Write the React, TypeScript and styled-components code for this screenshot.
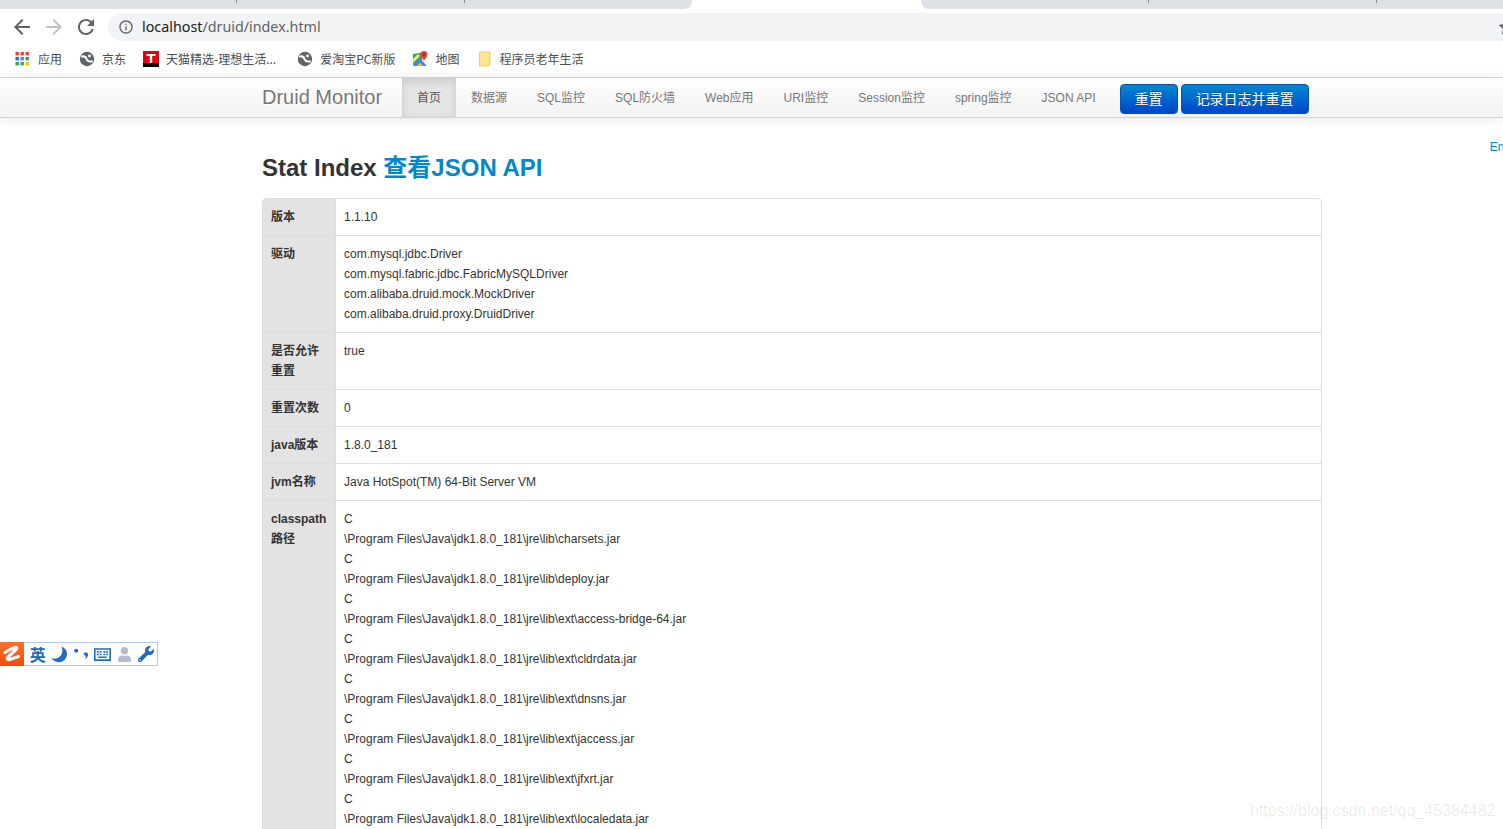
import React from "react";
import styled, { createGlobalStyle } from "styled-components";
import { FaUser, FaWrench } from "react-icons/fa";

const GlobalStyle = createGlobalStyle`
  html, body { margin: 0; padding: 0; height: 100%; overflow: hidden; background: #fff; }
  body { font-family: "Liberation Sans", "Noto Sans CJK SC", sans-serif; font-size: 12px; color: #333; }
`;

const Frame = styled.div`
  position: relative;
  width: 1503px;
  height: 829px;
  overflow: hidden;
`;

const TabStrip = styled.div`
  display: flex;
  height: 9px;
  background: #fff;
`;

const Tab = styled.div<{ $w: number; $active?: boolean; $round?: "l" | "r"; $sep?: boolean }>`
  width: ${(p) => p.$w}px;
  flex: none;
  background: ${(p) =>
    p.$active
      ? "transparent"
      : p.$sep
      ? "linear-gradient(#8d9095, #8d9095) right top / 1px 3px no-repeat, #dee1e6"
      : "#dee1e6"};
  border-bottom-right-radius: ${(p) => (p.$round === "r" ? "8px" : "0")};
  border-bottom-left-radius: ${(p) => (p.$round === "l" ? "8px" : "0")};
`;

const Toolbar = styled.div`
  display: flex;
  align-items: flex-end;
  height: 32px;
  padding-left: 10px;
`;

const NavIcon = styled.svg<{ $dim?: boolean }>`
  width: 24px;
  height: 24px;
  flex: none;
  margin: 0 8px 2px 0;
  fill: ${(p) => (p.$dim ? "#bdc1c6" : "#5f6368")};
`;

const AddressBar = styled.div`
  flex: 1;
  height: 28px;
  margin-left: 2px;
  display: flex;
  align-items: center;
  background: #f1f3f4;
  border-radius: 14px 0 0 14px;
  padding-left: 10px;
  overflow: hidden;
`;

const InfoIcon = styled.svg`
  width: 16px;
  height: 16px;
  flex: none;
  fill: #5f6368;
`;

const UrlText = styled.div`
  flex: 1;
  margin-left: 8px;
  padding-bottom: 2px;
  font-family: "Noto Sans", sans-serif;
  font-size: 14.3px;
  color: #5f6368;
  white-space: nowrap;
  b { font-weight: 400; color: #202124; }
`;

const StarIcon = styled.svg`
  width: 16px;
  height: 16px;
  flex: none;
  margin-right: -12px;
  fill: none;
  stroke: #5f6368;
  stroke-width: 1.5;
`;

const BookmarkBar = styled.div`
  display: flex;
  align-items: center;
  height: 36px;
  box-sizing: border-box;
  padding: 0 0 1px 15px;
  gap: 17px;
  background: #fff;
`;

const Bookmark = styled.div<{ $extra?: number }>`
  display: flex;
  align-items: center;
  gap: 7px;
  margin-right: ${(p) => p.$extra || 0}px;
  font-size: 12px;
  color: #4a4d52;
  white-space: nowrap;
  font-family: "Noto Sans CJK SC", "Liberation Sans", sans-serif;
`;

const BookIcon = styled.svg`
  width: 16px;
  height: 16px;
  flex: none;
  display: block;
`;

const NavBar = styled.header`
  position: relative;
  height: 39px;
  padding-left: 262px;
  display: flex;
  align-items: stretch;
  background: linear-gradient(#ffffff, #f2f2f2);
  border-top: 1px solid #d4d4d4;
  border-bottom: 1px solid #d4d4d4;
  box-shadow: 0 1px 10px rgba(0, 0, 0, 0.1);
`;

const Brand = styled.a`
  width: 140px;
  flex: none;
  font-size: 20px;
  font-weight: 200;
  color: #777;
  line-height: 39px;
  text-shadow: 0 1px 0 #fff;
`;

const NavItem = styled.a<{ $active?: boolean }>`
  padding: 1px 15px 0;
  line-height: 38px;
  font-size: 12px;
  white-space: nowrap;
  color: ${(p) => (p.$active ? "#555" : "#777")};
  background: ${(p) => (p.$active ? "#e5e5e5" : "transparent")};
  box-shadow: ${(p) => (p.$active ? "inset 0 3px 8px rgba(0, 0, 0, 0.125)" : "none")};
`;

const ResetButtons = styled.div`
  display: flex;
  align-items: center;
  gap: 3px;
  margin-left: 9px;
  padding-top: 3px;
`;

const ActionButton = styled.button`
  height: 30px;
  padding: 0 14px 2px;
  border: 1px solid #0055b3;
  border-radius: 4px;
  background: linear-gradient(#0088cc, #0044cc);
  color: #fff;
  font-family: "Liberation Sans", "Noto Sans CJK SC", sans-serif;
  font-size: 14px;
  text-shadow: 0 -1px 0 rgba(0, 0, 0, 0.25);
`;

const Main = styled.main`
  padding: 30px 0 0 262px;
`;

const LangLink = styled.a`
  float: right;
  margin: -11px -26px 0 0;
  line-height: 20px;
  color: #0088cc;
`;

const Heading = styled.h3`
  margin: 0 0 10px;
  font-size: 24px;
  line-height: 40px;
  font-weight: bold;
  color: #333;
  a { color: #0088cc; }
`;

const StatTable = styled.table`
  width: 1060px;
  border: 1px solid #ddd;
  border-collapse: separate;
  border-spacing: 0;
  border-radius: 4px;
  line-height: 20px;
  font-size: 12px;
  color: #333;
`;

const HeadCell = styled.th<{ $first?: boolean }>`
  width: 56px;
  padding: 8px;
  text-align: left;
  vertical-align: top;
  font-weight: bold;
  background: #e3e3e3;
  border-top: ${(p) => (p.$first ? "0" : "1px solid #ddd")};
  border-top-left-radius: ${(p) => (p.$first ? "3px" : "0")};
`;

const ValueCell = styled.td<{ $first?: boolean }>`
  padding: 8px;
  vertical-align: top;
  border-left: 1px solid #ddd;
  border-top: ${(p) => (p.$first ? "0" : "1px solid #ddd")};
`;

const Line = styled.div``;

const ImeBar = styled.div`
  position: absolute;
  left: 0;
  top: 642px;
  display: flex;
  align-items: center;
  width: 158px;
  height: 24px;
  box-sizing: border-box;
  background: #fff;
  border: 1px solid #b3ccef;
  border-left: 0;
`;

const ImeLogo = styled.svg`
  width: 24px;
  height: 24px;
  flex: none;
  margin: -1px 3px -1px 0;
`;

const ImeSlot = styled.span<{ $color?: string }>`
  flex: 1;
  display: flex;
  align-items: center;
  justify-content: center;
  height: 22px;
  color: ${(p) => p.$color || "#1f6cbb"};
  font-size: 16px;
  font-weight: bold;
  font-family: "Noto Sans CJK SC", sans-serif;
`;

const ImeIcon = styled.svg`
  width: 17px;
  height: 17px;
  fill: #1f6cbb;
`;

const Watermark = styled.div`
  position: absolute;
  left: 1250px;
  top: 801px;
  font-size: 16px;
  line-height: 20px;
  color: rgba(0, 0, 0, 0.09);
  white-space: nowrap;
`;

const Globe = () => (
  <BookIcon viewBox="0 0 16 16">
    <circle cx="8" cy="8" r="7.2" fill="#5f6368" />
    <path
      d="M3 5.500C5.500 5 7 6.500 7.500 8S9.500 11 13 10.500"
      fill="none"
      stroke="#fff"
      strokeWidth="2"
      strokeLinecap="round"
    />
    <circle cx="10.500" cy="5" r="1.400" fill="#fff" />
  </BookIcon>
);

const AppsIcon = () => {
  const colors = ["#ea4335", "#ea4335", "#ea4335", "#1a73e8", "#4285f4", "#34a853", "#34a853", "#34a853", "#fbbc04"];
  return (
    <BookIcon viewBox="0 0 16 16">
      {colors.map((c, i) => (
        <rect key={i} x={0.5 + (i % 3) * 5} y={1 + Math.floor(i / 3) * 5} width="3.4" height="3.4" fill={c} />
      ))}
    </BookIcon>
  );
};

const TmallIcon = () => (
  <BookIcon viewBox="0 0 16 16">
    <rect width="16" height="12" fill="#e60012" />
    <rect y="12" width="16" height="4" fill="#000" />
    <path d="M3.500 3h9v2H9.200v7H6.800V5H3.500z" fill="#fff" />
  </BookIcon>
);

const MapIcon = () => (
  <BookIcon viewBox="0 0 16 16">
    <path d="M1 3l9-1.500V15H2.500L1 14z" fill="#34a853" />
    <path d="M1 14L8 7l6 7v1H2.500z" fill="#4285f4" />
    <path d="M5 15l3-3.500 3 3.500z" fill="#fbbc04" />
    <path d="M1 8L6 3l2 2-7 7z" fill="#fbe68a" />
    <path d="M12 0a3.400 3.400 0 0 0-3.400 3.400C8.600 5.800 12 9.500 12 9.500s3.400-3.700 3.400-6.100A3.400 3.400 0 0 0 12 0z" fill="#ea4335" />
    <circle cx="12" cy="3.400" r="1.200" fill="#9c1b12" />
  </BookIcon>
);

const NoteIcon = () => (
  <BookIcon viewBox="0 0 16 16">
    <path d="M2.500 1h10.500v12.500L11 15H2.500z" fill="#fde68f" stroke="#f0cf5e" />
    <path d="M11 15v-2h2" fill="none" stroke="#f0cf5e" />
  </BookIcon>
);

const nav = ["数据源", "SQL监控", "SQL防火墙", "Web应用", "URI监控", "Session监控", "spring监控", "JSON API"];

const base = "\\Program Files\\Java\\jdk1.8.0_181\\jre\\lib\\";
const jars = [
  "charsets.jar",
  "deploy.jar",
  "ext\\access-bridge-64.jar",
  "ext\\cldrdata.jar",
  "ext\\dnsns.jar",
  "ext\\jaccess.jar",
  "ext\\jfxrt.jar",
  "ext\\localedata.jar",
];

const rows: { head: string; lines: string[] }[] = [
  { head: "版本", lines: ["1.1.10"] },
  {
    head: "驱动",
    lines: [
      "com.mysql.jdbc.Driver",
      "com.mysql.fabric.jdbc.FabricMySQLDriver",
      "com.alibaba.druid.mock.MockDriver",
      "com.alibaba.druid.proxy.DruidDriver",
    ],
  },
  { head: "是否允许重置", lines: ["true"] },
  { head: "重置次数", lines: ["0"] },
  { head: "java版本", lines: ["1.8.0_181"] },
  { head: "jvm名称", lines: ["Java HotSpot(TM) 64-Bit Server VM"] },
  { head: "classpath路径", lines: jars.flatMap((j) => ["C", base + j]) },
];

export default function App() {
  return (
    <Frame>
      <GlobalStyle />
      <TabStrip>
        <Tab $w={237} $sep />
        <Tab $w={228} $sep />
        <Tab $w={227} $round="r" />
        <Tab $w={229} $active />
        <Tab $w={228} $round="l" $sep />
        <Tab $w={228} $sep />
        <Tab $w={126} />
      </TabStrip>
      <Toolbar>
        <NavIcon viewBox="0 0 24 24">
          <path d="M20 11H7.830l5.590-5.590L12 4l-8 8 8 8 1.410-1.410L7.830 13H20v-2z" />
        </NavIcon>
        <NavIcon viewBox="0 0 24 24" $dim>
          <path d="M12 4l-1.410 1.410L16.170 11H4v2h12.170l-5.580 5.590L12 20l8-8z" />
        </NavIcon>
        <NavIcon viewBox="0 0 24 24">
          <path d="M17.650 6.350C16.200 4.900 14.210 4 12 4c-4.420 0-7.990 3.580-7.990 8s3.570 8 7.990 8c3.730 0 6.840-2.550 7.730-6h-2.080c-.82 2.330-3.040 4-5.650 4-3.310 0-6-2.690-6-6s2.690-6 6-6c1.660 0 3.140.69 4.220 1.780L13 11h7V4l-2.350 2.350z" />
        </NavIcon>
        <AddressBar>
          <InfoIcon viewBox="0 0 24 24">
            <path d="M11 7h2v2h-2zm0 4h2v6h-2zm1-9C6.480 2 2 6.480 2 12s4.480 10 10 10 10-4.480 10-10S17.520 2 12 2zm0 18c-4.410 0-8-3.590-8-8s3.590-8 8-8 8 3.590 8 8-3.590 8-8 8z" />
          </InfoIcon>
          <UrlText>
            <b>localhost</b>/druid/index.html
          </UrlText>
          <StarIcon viewBox="0 0 16 16">
            <path d="M8 1.500l2 4.300 4.700.6-3.500 3.200.9 4.700L8 12l-4.100 2.300.9-4.700L1.300 6.400l4.700-.6z" />
          </StarIcon>
        </AddressBar>
      </Toolbar>
      <BookmarkBar>
        <Bookmark>
          <AppsIcon />
          应用
        </Bookmark>
        <Bookmark>
          <Globe />
          京东
        </Bookmark>
        <Bookmark $extra={4}>
          <TmallIcon />
          天猫精选-理想生活...
        </Bookmark>
        <Bookmark>
          <Globe />
          爱淘宝PC新版
        </Bookmark>
        <Bookmark>
          <MapIcon />
          地图
        </Bookmark>
        <Bookmark>
          <NoteIcon />
          程序员老年生活
        </Bookmark>
      </BookmarkBar>
      <NavBar>
        <Brand>Druid Monitor</Brand>
        <NavItem $active>首页</NavItem>
        {nav.map((n) => (
          <NavItem key={n}>{n}</NavItem>
        ))}
        <ResetButtons>
          <ActionButton>重置</ActionButton>
          <ActionButton>记录日志并重置</ActionButton>
        </ResetButtons>
      </NavBar>
      <Main>
        <LangLink>English</LangLink>
        <Heading>
          Stat Index <a>查看JSON API</a>
        </Heading>
        <StatTable>
          <tbody>
            {rows.map((r, i) => (
              <tr key={r.head}>
                <HeadCell $first={i === 0}>{r.head}</HeadCell>
                <ValueCell $first={i === 0}>
                  {r.lines.map((l, k) => (
                    <Line key={k}>{l}</Line>
                  ))}
                </ValueCell>
              </tr>
            ))}
          </tbody>
        </StatTable>
      </Main>
      <ImeBar>
        <ImeLogo viewBox="0 0 24 24">
          <defs>
            <linearGradient id="imeOrange" x1="0" y1="0" x2="0" y2="1">
              <stop offset="0" stopColor="#fb6f35" />
              <stop offset="1" stopColor="#f04c05" />
            </linearGradient>
          </defs>
          <rect width="24" height="24" fill="url(#imeOrange)" />
          <path
            d="M5 10.500C8 8.500 12 6 15.500 5.500c1.500-.2 1.500 1.200.5 2.200L8 15c-1.500 1.500-.5 3 1.500 2.500 3-.7 6-2 9-3"
            fill="none"
            stroke="#fff"
            strokeWidth="3.200"
            strokeLinecap="round"
          />
        </ImeLogo>
        <ImeSlot>英</ImeSlot>
        <ImeSlot>
          <ImeIcon viewBox="0 0 16 16">
            <path d="M10 0.500c3.500 1.500 5.500 4.500 5 8-.6 4-3.800 6.800-7.500 6.800-3 0-5.800-1.500-7.200-3.900 1.700.8 3.700.9 5.500.2C10 10.200 11.800 5 10 0.500z" />
          </ImeIcon>
        </ImeSlot>
        <ImeSlot>
          <ImeIcon viewBox="0 0 16 16">
            <circle cx="3" cy="4.500" r="1.900" />
            <path d="M10.500 6.500c1-.6 3-.6 3.500.6.700 1.700-.6 4.300-2.700 5.400.8-1.500 1-2.600.3-3.300-1-.6-2-1.800-1.100-2.700z" />
          </ImeIcon>
        </ImeSlot>
        <ImeSlot>
          <ImeIcon viewBox="0 0 16 16">
            <path
              fillRule="evenodd"
              d="M0 2h16v12H0zM1.500 3.500v9h13v-9zM2.700 4.700h1.800v1.600H2.700zM5.300 4.700h1.800v1.600H5.300zM8.900 4.700h1.800v1.600H8.900zM11.500 4.700h1.800v1.600h-1.800zM2.700 7.200h1.800v1.600H2.700zM5.300 7.200h1.800v1.600H5.300zM8.900 7.200h1.800v1.600H8.900zM11.500 7.200h1.800v1.600h-1.800zM4 9.800h8v1.500H4z"
            />
          </ImeIcon>
        </ImeSlot>
        <ImeSlot $color="#b4bdcc">
          <FaUser size={15} />
        </ImeSlot>
        <ImeSlot>
          <FaWrench size={16} />
        </ImeSlot>
      </ImeBar>
      <Watermark>https://blog.csdn.net/qq_45384482</Watermark>
    </Frame>
  );
}
